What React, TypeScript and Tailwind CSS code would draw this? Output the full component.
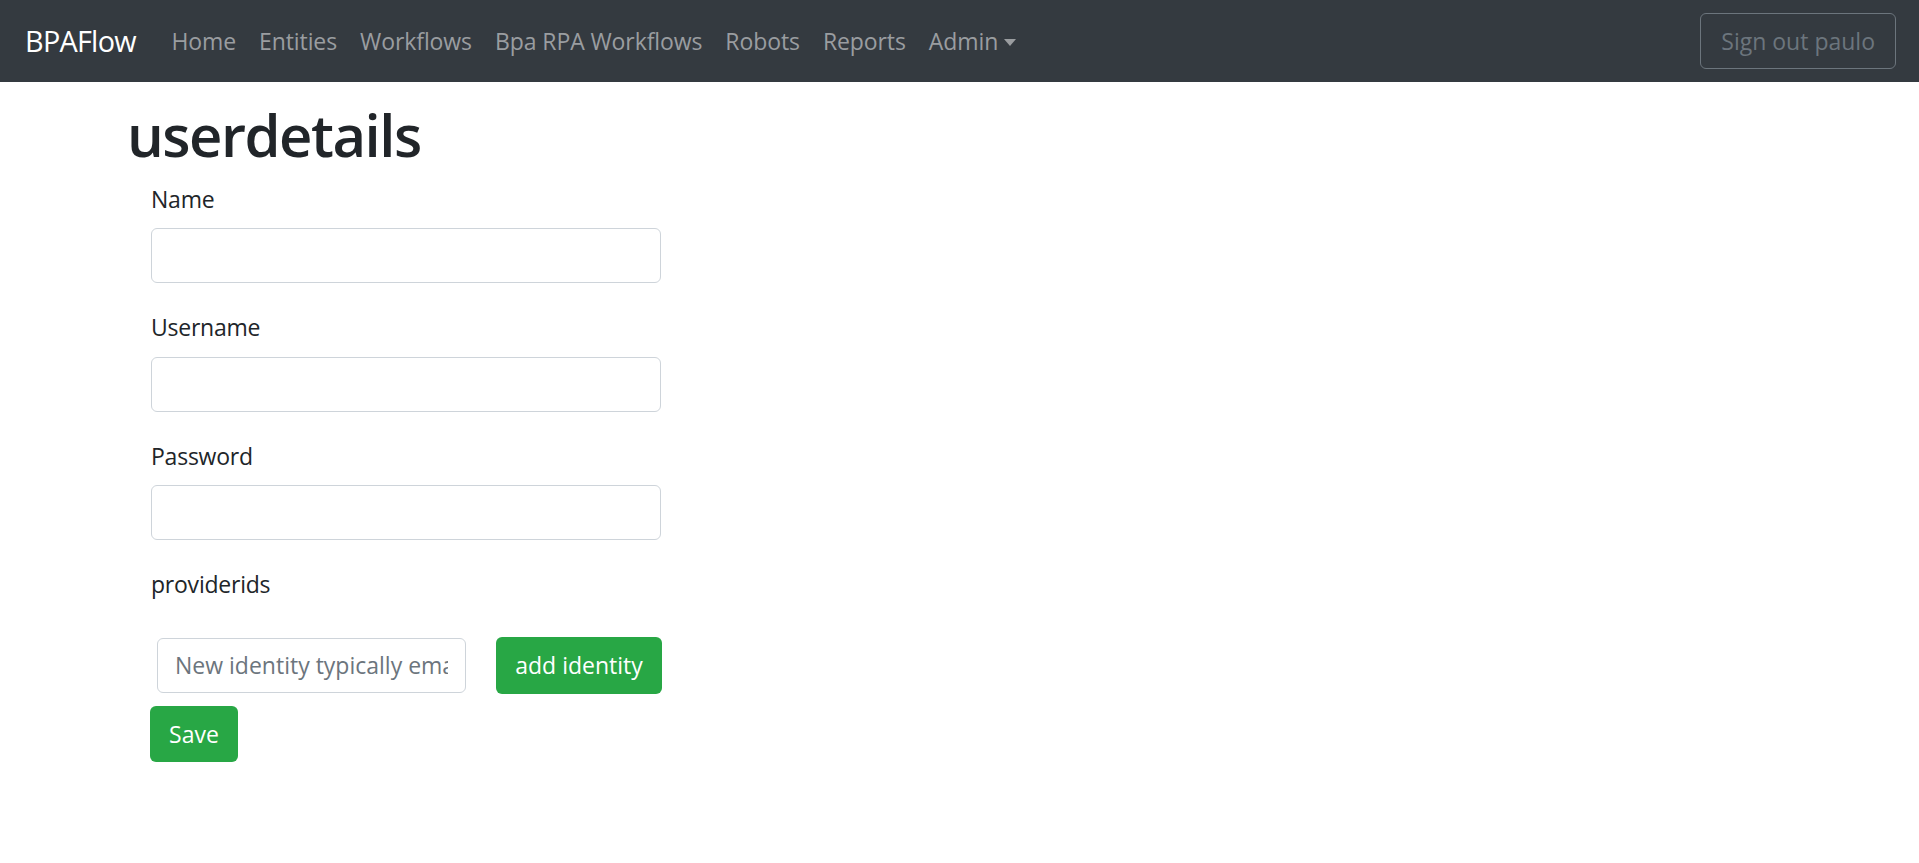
import { ChangeEvent, useState } from 'react';

const navLinks = ['Home', 'Entities', 'Workflows', 'Bpa RPA Workflows', 'Robots', 'Reports'];

function Field({ label, type = 'text' }: { label: string; type?: string }) {
  const [value, setValue] = useState('');
  return (
    <div className="mb-[27px]">
      <label className="block mb-[12px] text-[23px] leading-[34.5px] text-[#212529] tracking-[-0.01em]">{label}</label>
      <input
        type={type}
        value={value}
        onChange={(e: ChangeEvent<HTMLInputElement>) => setValue(e.target.value)}
        className="block w-[510px] h-[55px] px-[17px] text-[23px] text-[#495057] bg-white border border-[#ced4da] rounded-[6px] outline-none"
      />
    </div>
  );
}

export default function App() {
  const [identity, setIdentity] = useState('');

  return (
    <div className="min-h-screen bg-white" style={{ fontFamily: '"Open Sans", "Noto Sans", sans-serif' }}>
      {/* navbar */}
      <nav className="h-[82px] bg-[#343a40] flex items-center pl-[25px] pr-[23px]">
        <a className="text-[28.8px] text-white mr-[24px] leading-none tracking-[-0.025em]">BPAFlow</a>
        <ul className="flex items-center">
          {navLinks.map((l) => (
            <li key={l} className="px-[11.5px] text-[23px] text-[#9a9da0] tracking-[-0.004em]">
              {l}
            </li>
          ))}
          <li className="px-[11.5px] text-[23px] text-[#9a9da0] tracking-[-0.004em] flex items-center">
            Admin
            <span className="ml-[6px] mt-[3px] w-0 h-0 border-l-[6px] border-r-[6px] border-t-[7px] border-l-transparent border-r-transparent border-t-[#9a9da0]" />
          </li>
        </ul>
        <button className="ml-auto h-[56px] px-[20px] text-[23px] text-[#6c757d] border border-[#6c757d] rounded-[6px]">
          Sign out paulo
        </button>
      </nav>

      {/* content */}
      <div className="pl-[127px] pt-[18px]">
        <h1 className="text-[58px] leading-[1.2] font-semibold text-[#212529] mb-[12px] tracking-[-0.026em]">userdetails</h1>
        <form className="pl-[24px]" onSubmit={(e) => e.preventDefault()}>
          <Field label="Name" />
          <Field label="Username" />
          <Field label="Password" type="password" />
          <label className="block text-[23px] leading-[34.5px] text-[#212529] tracking-[-0.01em]">providerids</label>
          <div className="flex items-center mt-[35px] pl-[6px]">
            <input
              value={identity}
              onChange={(e) => setIdentity(e.target.value)}
              placeholder="New identity typically email"
              className="w-[309px] h-[55px] px-[17px] text-[23px] text-[#495057] placeholder:text-[#6c757d] bg-white border border-[#ced4da] rounded-[6px] outline-none"
            />
            <button
              type="button"
              className="ml-[30px] h-[57px] w-[166px] text-[23px] text-white bg-[#28a745] rounded-[6px]"
            >
              add identity
            </button>
          </div>
          <button
            type="submit"
            className="mt-[12px] -ml-[1px] h-[56px] w-[88px] pt-[2px] text-[23px] text-white bg-[#28a745] rounded-[6px]"
          >
            Save
          </button>
        </form>
      </div>
    </div>
  );
}
